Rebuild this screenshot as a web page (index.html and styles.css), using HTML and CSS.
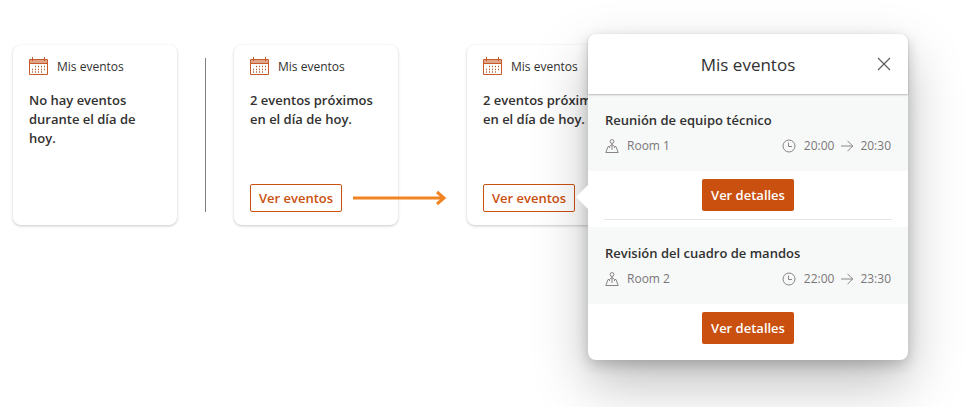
FILE: index.html
```html
<!DOCTYPE html>
<html lang="es">
<head>
  <meta charset="UTF-8" />
  <meta name="viewport" content="width=device-width, initial-scale=1.0"/>
  <title>Mis eventos</title>
  <link rel="stylesheet" href="styles.css">
</head>
<body>
<svg class="sprite" aria-hidden="true">
  <symbol id="calendario" viewBox="0 0 19 18">
    <path d="M1 3h17v3H1z" fill="#dfa388"/>
    <path d="M.5 2.500h18v15H.5zM.5 6.500h18M3.500 0v4M15.500 0v4" fill="none" stroke="#c75a28"/>
    <path d="M6 9.500h10M3 12.500h13M3 15h10" fill="none" stroke="#b5622f" stroke-width="1.500" stroke-dasharray="1 2"/>
  </symbol>
  <symbol id="lugar" viewBox="0 0 14 14">
    <path d="M4 7.500H3L.8 13.500h12.400L11 7.500h-1M7 4.500V11M4.500 9V7.500L7 5.500l2.500 2V9" fill="none" stroke="#8a8486"/>
    <circle cx="7" cy="2.500" r="1.900" fill="none" stroke="#8a8486"/>
  </symbol>
  <symbol id="reloj" viewBox="0 0 14 14">
    <circle cx="7" cy="7" r="6" fill="none" stroke="#8a8486"/>
    <path d="M6.500 3.500v4H10" fill="none" stroke="#8a8486"/>
  </symbol>
  <symbol id="flecha" viewBox="0 0 14 12">
    <path d="M1 6h12M7.500.8L12.700 6l-5.200 5.200" fill="none" stroke="#8a8486"/>
  </symbol>
</svg>

<main class="flujo">
  <section class="tarjeta">
    <div class="tarjeta-titulo"><svg class="calendario"><use href="#calendario"/></svg>Mis eventos</div>
    <p class="mensaje">No hay eventos durante el día de hoy.</p>
  </section>

  <div class="divisor"></div>

  <section class="tarjeta">
    <div class="tarjeta-titulo"><svg class="calendario"><use href="#calendario"/></svg>Mis eventos</div>
    <p class="mensaje">2 eventos próximos en el día de hoy.</p>
    <button type="button" class="boton">Ver eventos</button>
    <svg class="conector" viewBox="0 0 94 16" aria-hidden="true">
      <path d="M0 8h91M84 2l7 6-7 6" fill="none" stroke="#f28322" stroke-width="3"/>
    </svg>
  </section>

  <section class="tarjeta tarjeta-abierta">
    <div class="tarjeta-titulo"><svg class="calendario"><use href="#calendario"/></svg>Mis eventos</div>
    <p class="mensaje">2 eventos próximos en el día de hoy.</p>
    <button type="button" class="boton">Ver eventos</button>

    <div class="panel" role="dialog" aria-labelledby="panel-titulo">
      <header class="panel-cabecera">
        <h2 id="panel-titulo">Mis eventos</h2>
        <button type="button" class="cerrar" aria-label="Cerrar">
          <svg viewBox="0 0 14 14"><path d="M1 1l12 12M13 1L1 13" fill="none" stroke="#605e5c" stroke-width="1.200"/></svg>
        </button>
      </header>

      <article class="evento">
        <div class="evento-datos">
          <h3>Reunión de equipo técnico</h3>
          <div class="detalle">
            <svg class="icono"><use href="#lugar"/></svg>
            <span>Room 1</span>
            <svg class="icono reloj"><use href="#reloj"/></svg>
            <time>20:00</time>
            <svg class="flecha"><use href="#flecha"/></svg>
            <time>20:30</time>
          </div>
        </div>
        <div class="acciones"><button type="button" class="boton-lleno">Ver detalles</button></div>
      </article>

      <hr class="linea">

      <article class="evento">
        <div class="evento-datos">
          <h3>Revisión del cuadro de mandos</h3>
          <div class="detalle">
            <svg class="icono"><use href="#lugar"/></svg>
            <span>Room 2</span>
            <svg class="icono reloj"><use href="#reloj"/></svg>
            <time>22:00</time>
            <svg class="flecha"><use href="#flecha"/></svg>
            <time>23:30</time>
          </div>
        </div>
        <div class="acciones"><button type="button" class="boton-lleno">Ver detalles</button></div>
      </article>
    </div>
  </section>
</main>
</body>
</html>
```
FILE: styles.css
```css
* {
  box-sizing: border-box;
}
body {
  margin: 0;
  min-height: 100vh;
  background: white;
  font-family: "Open Sans", "Noto Sans", sans-serif;
  font-size: 13px;
  color: #323130;
}
h2, h3, p {
  margin: 0;
}
svg {
  display: block;
  flex: none;
}
button {
  font-family: inherit;
  cursor: pointer;
}
.sprite {
  position: absolute;
  width: 0;
  height: 0;
}
.flujo {
  display: flex;
  align-items: center;
  gap: 28px;
  padding: 45px 13px;
}

/* Tarjetas */
.tarjeta {
  position: relative;
  display: flex;
  flex-direction: column;
  align-items: flex-start;
  flex: none;
  width: 164px;
  min-height: 180px;
  padding: 12px 16px 13px;
  background: white;
  border-radius: 8px;
  box-shadow: 0 1px 3px rgba(0,0,0,0.22);
}
.tarjeta-abierta {
  margin-left: 41px;
}
.tarjeta-titulo {
  display: flex;
  align-items: center;
  gap: 9px;
  height: 18px;
  font-size: 12px;
}
.calendario {
  width: 19px;
  height: 18px;
}
.mensaje {
  margin-top: 16px;
  line-height: 19px;
  font-weight: 600;
}
.divisor {
  width: 1px;
  height: 154px;
  background: #7f7f7f;
}
.boton {
  width: 92px;
  height: 28px;
  margin-top: auto;
  padding: 0;
  background: white;
  border: 1px solid #ca5010;
  border-radius: 2px;
  color: #ca5010;
  font-size: 13px;
  font-weight: 600;
}
.conector {
  position: absolute;
  left: 119px;
  bottom: 19px;
  width: 94px;
  height: 16px;
}

/* Panel con la lista de eventos */
.panel {
  position: absolute;
  top: -11px;
  left: 121px;
  width: 320px;
  padding-bottom: 8px;
  background: white;
  border-radius: 8px;
  box-shadow: 0 24px 54px rgba(0,0,0,0.25), 0 5px 14px rgba(0,0,0,0.2);
}
.panel::before {
  content: "";
  position: absolute;
  top: 151px;
  left: -12px;
  border: 12px solid transparent;
  border-left: 0;
  border-right-color: white;
}
.panel-cabecera {
  position: relative;
  display: flex;
  align-items: center;
  justify-content: center;
  height: 60px;
  box-shadow: 0 1px 2px rgba(0,0,0,0.25);
  border-radius: 8px 8px 0 0;
}
.panel-cabecera h2 {
  font-size: 17px;
  font-weight: 500;
}
.cerrar {
  position: absolute;
  right: 12px;
  padding: 5px;
  background: none;
  border: 0;
}
.cerrar svg {
  width: 14px;
  height: 14px;
}
.evento-datos {
  padding: 15px 17px;
  background: #f7f9f9;
}
.evento-datos h3 {
  font-size: 13px;
  font-weight: 600;
  line-height: 22px;
}
.detalle {
  display: flex;
  align-items: center;
  margin-top: 4px;
  line-height: 21px;
  font-size: 12px;
  color: #7a7678;
}
.icono {
  width: 14px;
  height: 14px;
  margin-right: 8px;
}
.reloj {
  margin-left: auto;
}
.flecha {
  width: 14px;
  height: 12px;
  margin: 0 6px;
}
.acciones {
  display: flex;
  justify-content: center;
  padding: 8px;
}
.boton-lleno {
  width: 92px;
  height: 32px;
  padding: 0;
  background: #ca5010;
  border: 0;
  border-radius: 2px;
  color: white;
  font-size: 13px;
  font-weight: 600;
}
.linea {
  height: 1px;
  margin: 0 16px 7px;
  background: #e5e5e5;
  border: 0;
}
```
